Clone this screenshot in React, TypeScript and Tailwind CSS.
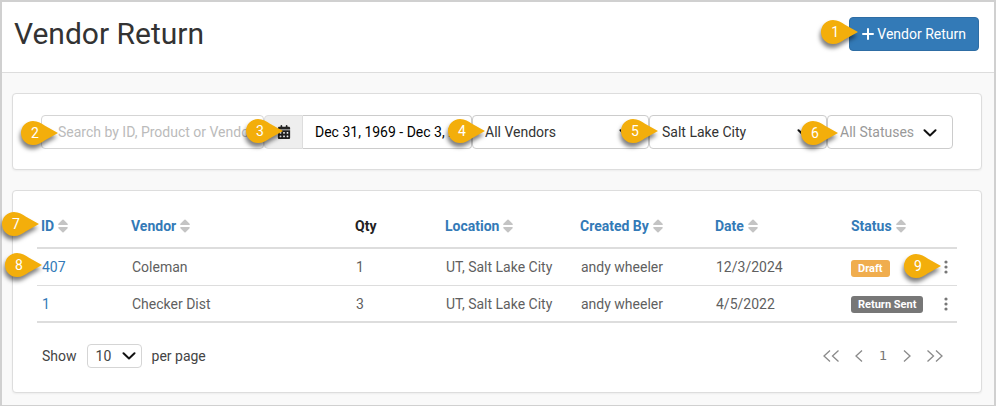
import React from 'react';
import { FaCalendarDays } from 'react-icons/fa6';

interface VendorReturn {
  id: string;
  vendor: string;
  qty: number;
  location: string;
  createdBy: string;
  date: string;
  status: string;
  badge: string;
}

const returns: VendorReturn[] = [
  { id: '407', vendor: 'Coleman', qty: 1, location: 'UT, Salt Lake City', createdBy: 'andy wheeler', date: '12/3/2024', status: 'Draft', badge: 'bg-[#f0ad4e]' },
  { id: '1', vendor: 'Checker Dist', qty: 3, location: 'UT, Salt Lake City', createdBy: 'andy wheeler', date: '4/5/2022', status: 'Return Sent', badge: 'bg-[#777777]' },
];

const columns = [
  { label: 'ID', sortable: true, width: 'w-[90px]' },
  { label: 'Vendor', sortable: true, width: '' },
  { label: 'Qty', sortable: false, width: 'w-[90px]' },
  { label: 'Location', sortable: true, width: 'w-[135px]' },
  { label: 'Created By', sortable: true, width: 'w-[135px]' },
  { label: 'Date', sortable: true, width: 'w-[136px]' },
  { label: 'Status', sortable: true, width: 'w-[88px]' },
];

// Numbered teardrop, pointing right at the thing it explains
const Callout: React.FC<{ n: number; className: string }> = ({ n, className }) => (
  <span className={`absolute z-10 block h-6 w-[37px] text-left text-sm font-normal leading-6 text-white pointer-events-none ${className}`}>
    <svg viewBox="0 0 37 24" className="absolute inset-0 h-6 w-[37px] overflow-visible drop-shadow-[-1px_4px_2px_rgba(0,0,0,0.5)]">
      <path d="M12 0C17 0 20.500 2.200 24 4.800L37 12L24 19.200C20.500 21.800 17 24 12 24A12 12 0 0 1 12 0Z" fill="#f3ae0b" />
    </svg>
    <span className="absolute left-0 top-0 w-7 text-center">{n}</span>
  </span>
);

const Chevron: React.FC<{ className: string }> = ({ className }) => (
  <svg viewBox="0 0 14 8" className={`absolute h-2 w-3.5 pointer-events-none ${className}`} fill="none" stroke="#111" strokeWidth="2" strokeLinecap="round" strokeLinejoin="round">
    <path d="M1.500 1.300L7 6.500L12.500 1.300" />
  </svg>
);

const SortIcon: React.FC = () => (
  <svg viewBox="0 0 10 14" className="h-3.5 w-2.5" fill="#c4c4c4">
    <path d="M4.400 0.800Q5 0.200 5.600 0.800L9.600 4.800Q10.200 6 9 6H1Q-0.200 6 0.400 4.800ZM4.400 13.200Q5 13.800 5.600 13.200L9.600 9.200Q10.200 8 9 8H1Q-0.200 8 0.400 9.200Z" />
  </svg>
);

const FilterSelect: React.FC<{ label: string; value: string; n: number; callout: string; muted?: boolean }> = ({ label, value, n, callout, muted }) => (
  <div className="relative min-w-0">
    <select
      aria-label={label}
      className={`block h-[34px] w-full appearance-none rounded border border-[#cccccc] bg-white pl-3 pr-8 ${muted ? 'text-[#999999]' : 'text-[#333333]'}`}
    >
      <option>{value}</option>
    </select>
    <Chevron className="right-4 top-[14px]" />
    <Callout n={n} className={callout} />
  </div>
);

const Pager: React.FC = () => {
  const arrow = (label: string, d: string, wide: boolean) => (
    <button type="button" aria-label={label}>
      <svg viewBox={wide ? '0 0 16 12' : '0 0 8 12'} className={wide ? 'h-3 w-4' : 'h-3 w-2'} fill="none" stroke="#8a8a8a" strokeWidth="1.300">
        <path d={d} />
      </svg>
    </button>
  );

  return (
    <nav aria-label="Pages" className="flex items-center gap-4 pr-3.5">
      {arrow('First page', 'M7 0.500L1 6L7 11.500M15.500 0.500L9.500 6L15.500 11.500', true)}
      {arrow('Previous page', 'M7 0.500L1 6L7 11.500', false)}
      <button type="button" className="w-2 font-['DejaVu_Sans',sans-serif] text-[13px] text-[#777777]">1</button>
      {arrow('Next page', 'M1 0.500L7 6L1 11.500', false)}
      {arrow('Last page', 'M0.500 0.500L6.500 6L0.500 11.500M9 0.500L15 6L9 11.500', true)}
    </nav>
  );
};

export default function App() {
  return (
    <div className="min-h-screen border-2 border-[#d0d0d0] bg-[#f9f9f9] font-[Roboto,sans-serif] text-sm text-[#444444]">
      <header className="flex h-[71px] items-center justify-between border-b border-[#dddddd] bg-white pl-3 pr-[15px] pb-1.5">
        <h1 className="text-[30px] leading-9 text-[#333333]">Vendor Return</h1>
        <div className="relative">
          <button type="button" className="flex h-[34px] items-center gap-[3px] rounded border border-[#2e6da4] bg-[#337ab7] px-3 text-white">
            <svg viewBox="0 0 12 12" className="h-3 w-3" stroke="currentColor" strokeWidth="2" strokeLinecap="round">
              <path d="M6 1V11M1 6H11" />
            </svg>
            Vendor Return
          </button>
          <Callout n={1} className="-left-7 top-[3px]" />
        </div>
      </header>

      <main className="flex flex-col gap-5 pb-3 pl-2.5 pr-3 pt-5">
        <section className="rounded border border-[#dddddd] bg-white px-7 pb-5 pt-[21px] shadow-xs">
          <div className="grid grid-cols-[223fr_208fr_177fr_178fr_126fr]">
            <div className="relative min-w-0">
              <input
                type="text"
                aria-label="Search"
                placeholder="Search by ID, Product or Vendor"
                className="block h-[34px] w-full rounded border border-[#d5d5d5] bg-white px-4 placeholder:text-[#bbbbbb]"
              />
              <Callout n={2} className="-left-5 top-[6px]" />
            </div>
            <div className="relative flex min-w-0">
              <span className="flex h-[34px] w-[39px] shrink-0 items-center justify-center rounded-l border border-[#dddddd] bg-[#eeeeee] text-[#222222]">
                <FaCalendarDays className="h-3.5 w-3.5" />
              </span>
              <input
                type="text"
                aria-label="Date range"
                defaultValue="Dec 31, 1969 - Dec 3, 2024"
                className="h-[34px] min-w-0 flex-1 rounded-r border border-l-0 border-[#cccccc] bg-white px-3 text-black"
              />
              <Callout n={3} className="-left-[18px] top-1" />
            </div>
            <FilterSelect label="Vendor" value="All Vendors" n={4} callout="-left-6 top-1" />
            <FilterSelect label="Location" value="Salt Lake City" n={5} callout="-left-7 top-1" />
            <FilterSelect label="Status" value="All Statuses" n={6} callout="-left-[26px] top-[6px]" muted />
          </div>
        </section>

        <section className="rounded border border-[#dddddd] bg-white px-6 pb-6 pt-3.5 shadow-xs">
          <table className="w-full table-fixed border-separate border-spacing-0 text-left">
            <thead>
              <tr className="h-11">
                {columns.map((col) => (
                  <th key={col.label} className={`relative border-b-2 border-[#dddddd] px-1 py-0 font-bold ${col.width} ${col.sortable ? 'text-[#337ab7]' : 'text-[#222222]'}`}>
                    {col.sortable ? (
                      <button type="button" className="flex items-center gap-1 whitespace-nowrap">
                        {col.label}
                        <SortIcon />
                      </button>
                    ) : (
                      col.label
                    )}
                    {col.label === 'ID' && <Callout n={7} className="-left-[35px] top-[7px]" />}
                  </th>
                ))}
                <th className="w-[22px] border-b-2 border-[#dddddd] p-0" aria-label="Actions" />
              </tr>
            </thead>
            <tbody className="text-[#5f5f5f] [&_td]:border-b [&_td]:border-[#dddddd] [&_td]:px-[5px] [&_td]:py-0 [&_tr:last-child_td]:border-b-2">
              {returns.map((row, i) => (
                <tr key={row.id} className="h-[37px]">
                  <td className="relative">
                    <a href="#" className="text-[#337ab7]">{row.id}</a>
                    {i === 0 && <Callout n={8} className="-left-8 top-1" />}
                  </td>
                  <td>{row.vendor}</td>
                  <td>{row.qty}</td>
                  <td>{row.location}</td>
                  <td>{row.createdBy}</td>
                  <td>{row.date}</td>
                  <td className="whitespace-nowrap">
                    <span className={`-ml-px inline-block h-[17px] rounded-[3px] px-[7px] align-middle text-[11px] font-bold leading-[17px] text-white ${row.badge}`}>
                      {row.status}
                    </span>
                  </td>
                  <td className="relative">
                    <button type="button" aria-label={`Actions for ${row.id}`} className="ml-1 block">
                      <svg viewBox="0 0 4 14" className="h-3.5 w-1" fill="#777777">
                        <circle cx="2" cy="2" r="1.600" />
                        <circle cx="2" cy="7" r="1.600" />
                        <circle cx="2" cy="12" r="1.600" />
                      </svg>
                    </button>
                    {i === 0 && <Callout n={9} className="right-4 top-[5px]" />}
                  </td>
                </tr>
              ))}
            </tbody>
          </table>

          <div className="flex items-center justify-between pt-[21px]">
            <label className="flex items-center gap-2.5 pl-[5px]">
              Show
              <span className="relative">
                <select className="block h-6 w-[55px] appearance-none rounded border border-[#d5d5d5] bg-white pl-2">
                  <option>10</option>
                </select>
                <Chevron className="right-1.5 top-2" />
              </span>
              per page
            </label>
            <Pager />
          </div>
        </section>
      </main>
    </div>
  );
}
